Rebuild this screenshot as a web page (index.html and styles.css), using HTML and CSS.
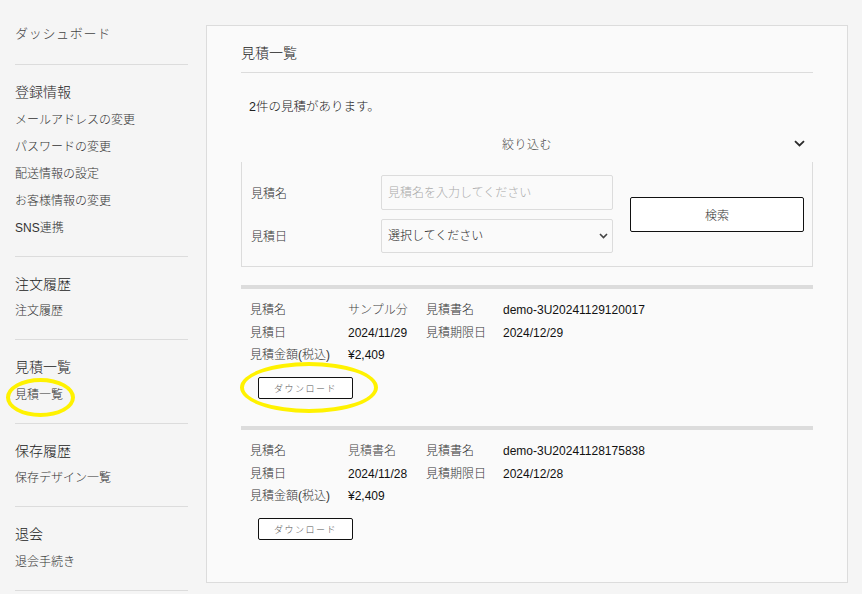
FILE: index.html
```html
<!DOCTYPE html>
<html lang="ja">
<head>
<meta charset="utf-8">
<title>見積一覧</title>
<link rel="stylesheet" href="styles.css">
</head>
<body>
<div class="layout">
  <aside class="sidebar">
    <div class="side-top"><a class="side-dash">ダッシュボード</a></div>
    <section class="side-section">
      <h3>登録情報</h3>
      <ul>
        <li>メールアドレスの変更</li>
        <li>パスワードの変更</li>
        <li>配送情報の設定</li>
        <li>お客様情報の変更</li>
        <li>SNS連携</li>
      </ul>
    </section>
    <section class="side-section">
      <h3>注文履歴</h3>
      <ul><li>注文履歴</li></ul>
    </section>
    <section class="side-section">
      <h3>見積一覧</h3>
      <ul><li>見積一覧</li></ul>
    </section>
    <section class="side-section">
      <h3>保存履歴</h3>
      <ul><li>保存デザイン一覧</li></ul>
    </section>
    <section class="side-section side-last">
      <h3>退会</h3>
      <ul><li>退会手続き</li></ul>
    </section>
  </aside>

  <main class="panel">
    <h1 class="panel-title">見積一覧</h1>
    <p class="count">2件の見積があります。</p>
    <div class="filter-toggle">
      <span class="toggle-spacer"></span>
      <span class="toggle-label">絞り込む</span>
      <svg class="toggle-chev" width="11" height="7" viewBox="0 0 11 7"><path d="M1 1.2 L5.5 5.5 L10 1.2" fill="none" stroke="#2a2a2a" stroke-width="1.8"/></svg>
    </div>
    <div class="filter-box">
      <div class="filter-fields">
        <label class="f-label">見積名</label>
        <input class="f-input" type="text" placeholder="見積名を入力してください">
        <label class="f-label">見積日</label>
        <div class="f-select-wrap">
          <select class="f-select"><option>選択してください</option></select>
          <svg class="select-chev" width="9" height="6" viewBox="0 0 9 6"><path d="M1 1 L4.5 4.5 L8 1" fill="none" stroke="#444" stroke-width="1.6"/></svg>
        </div>
      </div>
      <button class="search-btn">検索</button>
    </div>

    <div class="results">
      <div class="result">
        <div class="r-grid">
          <span class="r-label">見積名</span><span class="r-val r-soft">サンプル分</span><span class="r-label">見積書名</span><span class="r-val">demo-3U20241129120017</span>
          <span class="r-label">見積日</span><span class="r-val">2024/11/29</span><span class="r-label">見積期限日</span><span class="r-val">2024/12/29</span>
          <span class="r-label">見積金額(税込)</span><span class="r-val">¥2,409</span><span></span><span></span>
        </div>
        <button class="dl-btn">ダウンロード</button>
      </div>
      <div class="result">
        <div class="r-grid">
          <span class="r-label">見積名</span><span class="r-val r-soft">見積書名</span><span class="r-label">見積書名</span><span class="r-val">demo-3U20241128175838</span>
          <span class="r-label">見積日</span><span class="r-val">2024/11/28</span><span class="r-label">見積期限日</span><span class="r-val">2024/12/28</span>
          <span class="r-label">見積金額(税込)</span><span class="r-val">¥2,409</span><span></span><span></span>
        </div>
        <button class="dl-btn">ダウンロード</button>
      </div>
    </div>
  </main>
</div>
<div class="mark mark-side"></div>
<div class="mark mark-dl"></div>
</body>
</html>
```
FILE: styles.css
```css
* { box-sizing: border-box; }
html, body { margin: 0; padding: 0; }
body {
  background: #f5f5f5;
  font-family: "Liberation Sans", "Noto Sans CJK JP", sans-serif;
  font-weight: 300;
  color: #222;
  width: 862px;
  height: 594px;
  overflow: hidden;
  position: relative;
}
.layout {
  display: flex;
  align-items: flex-start;
}
.sidebar {
  width: 173px;
  margin-left: 15px;
}
.side-top {
  padding: 20px 0 16px;
}
.side-dash {
  display: block;
  font-size: 13px;
  line-height: 28px;
  letter-spacing: 0.7px;
  color: #444;
}
.side-section {
  border-top: 1px solid #dcdcdc;
  padding: 13px 0 14px;
}
.side-last { border-bottom: 1px solid #dcdcdc; }
.side-section h3 {
  margin: 0;
  font-size: 14px;
  font-weight: 300;
  line-height: 28.5px;
  color: #222;
}
.side-section ul {
  list-style: none;
  margin: 0;
  padding: 0;
}
.side-section li {
  font-size: 12px;
  line-height: 27px;
  color: #333;
}

.panel {
  margin-left: 18px;
  margin-top: 25px;
  width: 642px;
  height: 558px;
  background: #fafafa;
  border: 1px solid #dcdcdc;
  padding: 0 34px;
}
.panel-title {
  margin: 0;
  font-size: 14px;
  font-weight: 300;
  line-height: 20px;
  padding: 17px 0 9px;
  border-bottom: 1px solid #dcdcdc;
  color: #222;
}
.count {
  margin: 25px 0 0 8px;
  font-size: 12.5px;
  line-height: 18px;
  color: #222;
}
.filter-toggle {
  margin-top: 9px;
  height: 37px;
  display: grid;
  grid-template-columns: 1fr auto 1fr;
  align-items: center;
}
.toggle-label {
  font-size: 12px;
  color: #444;
  letter-spacing: 0.5px;
}
.toggle-chev {
  justify-self: end;
  margin-right: 8px;
}
.filter-box {
  border: 1px solid #dcdcdc;
  border-top: none;
  padding: 13px 8px 13px 9px;
  display: flex;
  align-items: center;
  gap: 17px;
}
.filter-fields {
  display: grid;
  grid-template-columns: 130px 232px;
  row-gap: 9px;
  align-items: center;
}
.f-label {
  font-size: 12px;
  color: #333;
  margin-top: -1px;
}
.f-input {
  height: 35px;
  border: 1px solid #dcdcdc;
  border-radius: 2px;
  background: #fafafa;
  padding: 0 6px;
  font-family: inherit;
  font-weight: 300;
  font-size: 12px;
  color: #222;
  outline: none;
}
.f-input::placeholder { color: #aaa; }
.f-select-wrap {
  position: relative;
  height: 34px;
}
.f-select {
  width: 100%;
  height: 34px;
  border: 1px solid #dcdcdc;
  border-radius: 2px;
  background: #fafafa;
  padding: 0 6px;
  font-family: inherit;
  font-weight: 300;
  font-size: 12px;
  color: #222;
  appearance: none;
  -webkit-appearance: none;
  outline: none;
}
.select-chev {
  position: absolute;
  right: 5px;
  top: 14px;
}
.search-btn {
  width: 174px;
  height: 35px;
  background: #fff;
  border: 1px solid #111;
  border-radius: 2px;
  font-family: inherit;
  font-weight: 300;
  font-size: 12px;
  color: #333;
  padding: 0;
}

.results {
  margin-top: 18px;
}
.result {
  border-top: 4px solid #dcdcdc;
  padding: 10px 0 27px;
}
.r-grid {
  display: grid;
  grid-template-columns: 98px 78px 77px auto;
  padding-left: 9px;
  font-size: 12px;
  line-height: 22.5px;
}
.r-label { color: #333; }
.r-val { color: #111; }
.r-soft { color: #444; }
.dl-btn {
  display: block;
  margin: 10.5px 0 0 17px;
  width: 95px;
  height: 22px;
  background: #fff;
  border: 1px solid #111;
  border-radius: 2px;
  font-family: inherit;
  font-weight: 300;
  font-size: 9px;
  letter-spacing: 1.5px;
  color: #555;
  padding: 0;
}

.mark {
  position: absolute;
  border: 4px solid #fff200;
  border-radius: 50%;
  pointer-events: none;
}
.mark-side {
  left: 6px;
  top: 378px;
  width: 69px;
  height: 39px;
}
.mark-dl {
  left: 240px;
  top: 362px;
  width: 138px;
  height: 51px;
}
```
